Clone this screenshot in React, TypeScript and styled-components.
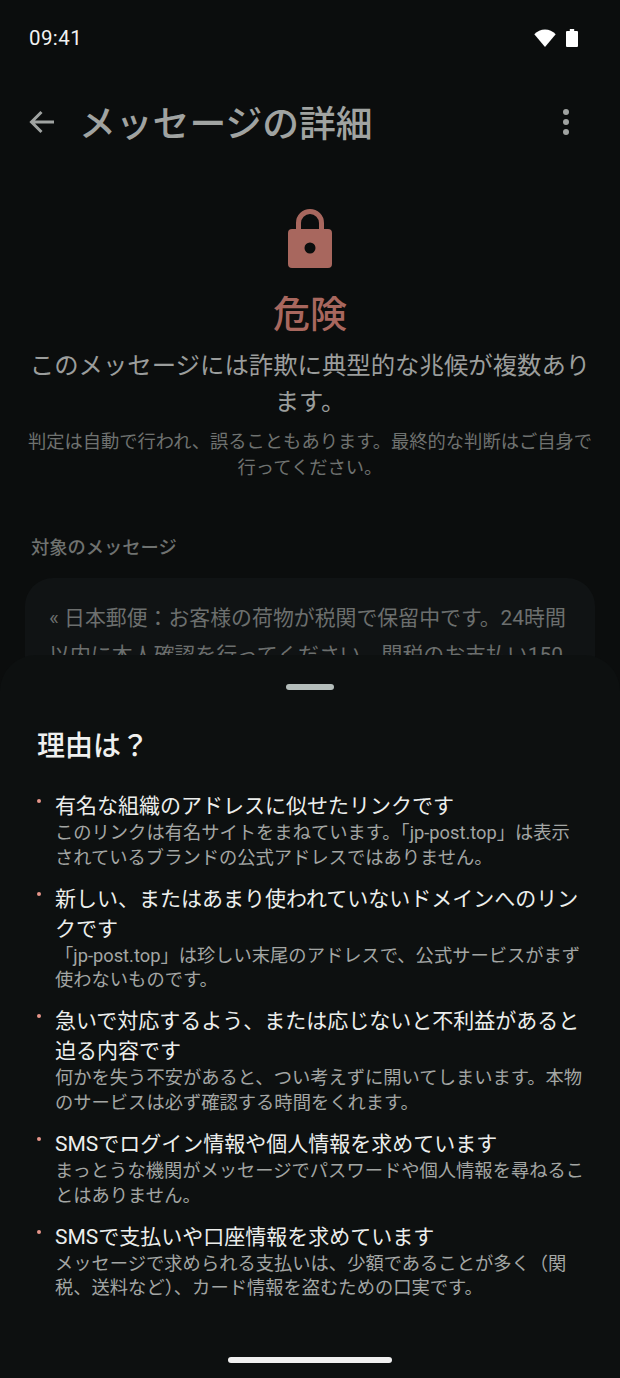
import React from "react";
import styled, { createGlobalStyle } from "styled-components";

const Global = createGlobalStyle`
  html, body { margin: 0; padding: 0; background: #0b0d0d; }
  * { box-sizing: border-box; }
  body { font-family: Roboto, "Noto Sans CJK JP", sans-serif; }
`;

const Screen = styled.div`
  position: relative;
  width: 620px;
  height: 1378px;
  overflow: hidden;
  background: #0b0d0d;
  display: flex;
  flex-direction: column;
`;

const StatusBar = styled.div`
  height: 76px;
  flex: none;
  padding: 0 42px 0 29px;
  display: flex;
  align-items: center;
  justify-content: space-between;
`;

const Clock = styled.span`
  font-size: 20.5px;
  color: #f2f2f2;
  letter-spacing: 0.4px;
`;

const StatusIcons = styled.div`
  display: flex;
  align-items: center;
  gap: 10px;
`;

const AppBar = styled.div`
  height: 92px;
  flex: none;
  padding: 0 51px 0 28px;
  display: flex;
  align-items: center;
  gap: 19px;
`;

const Title = styled.h1`
  flex: 1;
  margin: 6px 0 0;
  font-size: 36.8px;
  line-height: 48px;
  font-weight: 500;
  color: #a0a3a1;
`;

const Hero = styled.section`
  display: flex;
  flex-direction: column;
  align-items: center;
  padding: 41px 25px 0;
  text-align: center;
`;

const Verdict = styled.div`
  margin-top: 22px;
  font-size: 37px;
  line-height: 50px;
  font-weight: 500;
  color: #a8675e;
`;

const Description = styled.p`
  margin: 7px 0 0;
  font-size: 24.4px;
  line-height: 36px;
  color: #9b9d9c;
`;

const Disclaimer = styled.p`
  margin: 9px 0 0;
  font-size: 18.3px;
  line-height: 26px;
  color: #6f7270;
`;

const SectionLabel = styled.div`
  margin: 54px 0 0 31px;
  font-size: 18.25px;
  line-height: 26px;
  font-weight: 500;
  color: #6f7270;
`;

const MessageCard = styled.div`
  margin: 17px 25px 0;
  padding: 22px 24px;
  height: 300px;
  border-radius: 28px;
  background: #101314;
  font-size: 20.9px;
  line-height: 37px;
  color: #6c6f6e;
`;

const Sheet = styled.section`
  position: absolute;
  left: 0;
  right: 0;
  top: 655px;
  bottom: 0;
  border-radius: 36px 36px 0 0;
  background: #0d1010;
  padding: 29px 37px 0;
  display: flex;
  flex-direction: column;
`;

const Handle = styled.div`
  width: 48px;
  height: 6px;
  border-radius: 3px;
  background: #b4bdbb;
  align-self: center;
  flex: none;
`;

const SheetTitle = styled.h2`
  margin: 37px 0 0;
  font-size: 28px;
  line-height: 40px;
  font-weight: 500;
  color: #eff0ef;
`;

const ReasonList = styled.ul`
  list-style: none;
  margin: 24px -4px 0 0;
  padding: 0;
  display: flex;
  flex-direction: column;
  gap: 13.7px;
`;

const Reason = styled.li`
  position: relative;
  padding-left: 18px;

  &::before {
    content: "";
    position: absolute;
    left: 0;
    top: 8px;
    width: 4px;
    height: 4px;
    border-radius: 50%;
    background: #e5958a;
  }
`;

const ReasonTitle = styled.div`
  font-size: 21px;
  line-height: 30px;
  color: #eceeec;
`;

const ReasonBody = styled.div`
  font-size: 18.3px;
  line-height: 24.5px;
  color: #a3a6a4;
`;

const HomeIndicator = styled.div`
  position: absolute;
  left: 228px;
  bottom: 15px;
  width: 164px;
  height: 6px;
  border-radius: 3px;
  background: #f0f0f0;
`;

const reasons = [
  {
    title: "有名な組織のアドレスに似せたリンクです",
    body: "このリンクは有名サイトをまねています。「jp-post.top」は表示されているブランドの公式アドレスではありません。",
  },
  {
    title: "新しい、またはあまり使われていないドメインへのリンクです",
    body: "「jp-post.top」は珍しい末尾のアドレスで、公式サービスがまず使わないものです。",
  },
  {
    title: "急いで対応するよう、または応じないと不利益があると迫る内容です",
    body: "何かを失う不安があると、つい考えずに開いてしまいます。本物のサービスは必ず確認する時間をくれます。",
  },
  {
    title: "SMSでログイン情報や個人情報を求めています",
    body: "まっとうな機関がメッセージでパスワードや個人情報を尋ねることはありません。",
  },
  {
    title: "SMSで支払いや口座情報を求めています",
    body: "メッセージで求められる支払いは、少額であることが多く（関税、送料など）、カード情報を盗むための口実です。",
  },
];

export default function App() {
  return (
    <Screen>
      <Global />
      <StatusBar>
        <Clock>09:41</Clock>
        <StatusIcons>
          <svg width="22" height="18" viewBox="0 0 22 18">
            <path d="M11 18 L0.3 5.2 Q4.8 0.5 11 0.5 Q17.2 0.5 21.7 5.2 Z" fill="#ffffff" />
          </svg>
          <svg width="12" height="18" viewBox="0 0 12 18">
            <path d="M3.8 0 H8.2 V2 H11 Q12 2 12 3 V17 Q12 18 11 18 H1 Q0 18 0 17 V3 Q0 2 1 2 H3.8 Z" fill="#ffffff" />
          </svg>
        </StatusIcons>
      </StatusBar>
      <AppBar>
        <svg width="32" height="26" viewBox="0 0 32 26" fill="none">
          <path d="M26 13 H4 M13.5 3 L3.5 13 L13.5 23" stroke="#a0a3a1" strokeWidth="3" />
        </svg>
        <Title>メッセージの詳細</Title>
        <svg width="6" height="26" viewBox="0 0 6 26">
          <circle cx="3" cy="3" r="3" fill="#a0a3a1" />
          <circle cx="3" cy="13" r="3" fill="#a0a3a1" />
          <circle cx="3" cy="23" r="3" fill="#a0a3a1" />
        </svg>
      </AppBar>
      <Hero>
        <svg width="44" height="60" viewBox="0 0 44 60">
          <path
            fillRule="evenodd"
            fill="#a8675e"
            d="M8 20 V14 A14 14 0 0 1 36 14 V20 H40 A4 4 0 0 1 44 24 V55 A4 4 0 0 1 40 59 H4 A4 4 0 0 1 0 55 V24 A4 4 0 0 1 4 20 Z M13 20 H31 V14 A9 9 0 0 0 13 14 Z M22 33.5 A5.5 5.5 0 1 0 22 44.5 A5.5 5.5 0 1 0 22 33.5 Z"
          />
        </svg>
        <Verdict>危険</Verdict>
        <Description>このメッセージには詐欺に典型的な兆候が複数あります。</Description>
        <Disclaimer>判定は自動で行われ、誤ることもあります。最終的な判断はご自身で行ってください。</Disclaimer>
      </Hero>
      <SectionLabel>対象のメッセージ</SectionLabel>
      <MessageCard>« 日本郵便：お客様の荷物が税関で保留中です。24時間以内に本人確認を行ってください。関税のお支払い150円が必要です。</MessageCard>
      <Sheet>
        <Handle />
        <SheetTitle>理由は？</SheetTitle>
        <ReasonList>
          {reasons.map((r) => (
            <Reason key={r.title}>
              <ReasonTitle>{r.title}</ReasonTitle>
              <ReasonBody>{r.body}</ReasonBody>
            </Reason>
          ))}
        </ReasonList>
      </Sheet>
      <HomeIndicator />
    </Screen>
  );
}
